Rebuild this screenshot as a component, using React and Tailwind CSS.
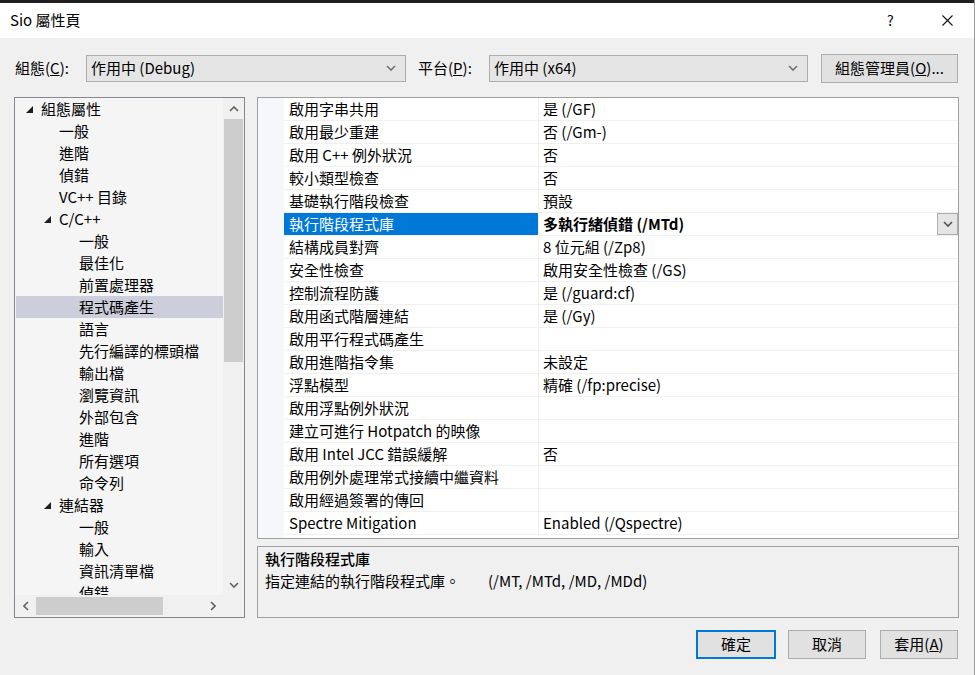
import React from "react";

const tree = [
  { t: "組態屬性", pl: "pl-[10px]", exp: true },
  { t: "一般", pl: "pl-[44px]" },
  { t: "進階", pl: "pl-[44px]" },
  { t: "偵錯", pl: "pl-[44px]" },
  { t: "VC++ 目錄", pl: "pl-[44px]" },
  { t: "C/C++", pl: "pl-[28px]", exp: true },
  { t: "一般", pl: "pl-[64px]" },
  { t: "最佳化", pl: "pl-[64px]" },
  { t: "前置處理器", pl: "pl-[64px]" },
  { t: "程式碼產生", pl: "pl-[64px]", sel: true },
  { t: "語言", pl: "pl-[64px]" },
  { t: "先行編譯的標頭檔", pl: "pl-[64px]" },
  { t: "輸出檔", pl: "pl-[64px]" },
  { t: "瀏覽資訊", pl: "pl-[64px]" },
  { t: "外部包含", pl: "pl-[64px]" },
  { t: "進階", pl: "pl-[64px]" },
  { t: "所有選項", pl: "pl-[64px]" },
  { t: "命令列", pl: "pl-[64px]" },
  { t: "連結器", pl: "pl-[28px]", exp: true },
  { t: "一般", pl: "pl-[64px]" },
  { t: "輸入", pl: "pl-[64px]" },
  { t: "資訊清單檔", pl: "pl-[64px]" },
  { t: "偵錯", pl: "pl-[64px]" },
];

const props = [
  ["啟用字串共用", "是 (/GF)"],
  ["啟用最少重建", "否 (/Gm-)"],
  ["啟用 C++ 例外狀況", "否"],
  ["較小類型檢查", "否"],
  ["基礎執行階段檢查", "預設"],
  ["執行階段程式庫", "多執行緒偵錯 (/MTd)", true],
  ["結構成員對齊", "8 位元組 (/Zp8)"],
  ["安全性檢查", "啟用安全性檢查 (/GS)"],
  ["控制流程防護", "是 (/guard:cf)"],
  ["啟用函式階層連結", "是 (/Gy)"],
  ["啟用平行程式碼產生", ""],
  ["啟用進階指令集", "未設定"],
  ["浮點模型", "精確 (/fp:precise)"],
  ["啟用浮點例外狀況", ""],
  ["建立可進行 Hotpatch 的映像", ""],
  ["啟用 Intel JCC 錯誤緩解", "否"],
  ["啟用例外處理常式接續中繼資料", ""],
  ["啟用經過簽署的傳回", ""],
  ["Spectre Mitigation", "Enabled (/Qspectre)"],
];

function Chevron({ dir = "down", className = "" }) {
  const pts = {
    down: "1,1 5,5 9,1",
    up: "1,5 5,1 9,5",
    left: "5,1 1,5 5,9",
    right: "1,1 5,5 1,9",
  }[dir];
  const vb = dir === "left" || dir === "right" ? "0 0 6 10" : "0 0 10 6";
  const sz = dir === "left" || dir === "right" ? "w-[6px] h-[10px]" : "w-[10px] h-[6px]";
  return (
    <svg viewBox={vb} className={`${sz} ${className}`} fill="none" stroke="currentColor" strokeWidth="1.6">
      <polyline points={pts} />
    </svg>
  );
}

function Combo({ text, w }) {
  return (
    <div className={`${w} h-[27px] bg-[#e5e5e5] border border-[#adadad] flex items-center pl-[4px] pr-[9px]`}>
      <span className="flex-1 text-[15px] text-black">{text}</span>
      <Chevron dir="down" className="text-[#707070] w-[8px] h-[5px]" />
    </div>
  );
}

export default function App() {
  return (
    <div className="w-[975px] h-[675px] bg-[#f0f0f0] flex flex-col font-['Noto_Sans_CJK_TC',sans-serif] text-black overflow-hidden border-r border-[#9a9a9a]">
      <div className="h-[3px] bg-[#1f1f1f]" />
      {/* title bar */}
      <div className="h-[35px] bg-white flex items-center pl-[10px]">
        <span className="text-[15px] flex-1">Sio 屬性頁</span>
        <span className="text-[14px] w-[55px] text-left">?</span>
        <div className="w-[32px] flex items-center">
          <svg viewBox="0 0 11 11" className="w-[11px] h-[11px]" stroke="#111" strokeWidth="1.1">
            <line x1="0.5" y1="0.5" x2="10.5" y2="10.5" />
            <line x1="10.5" y1="0.5" x2="0.5" y2="10.5" />
          </svg>
        </div>
      </div>

      {/* toolbar */}
      <div className="mt-[15px] h-[30px] flex items-center pl-[15px]">
        <span className="text-[15px] w-[71px]">
          組態(<span className="underline">C</span>):
        </span>
        <Combo text="作用中 (Debug)" w="w-[320px]" />
        <span className="text-[15px] ml-[12px] w-[71px]">
          平台(<span className="underline">P</span>):
        </span>
        <Combo text="作用中 (x64)" w="w-[319px]" />
        <div className="ml-[13px] w-[137px] h-[29px] bg-[#e1e1e1] border border-[#adadad] flex items-center justify-center text-[15px]">
          組態管理員(<span className="underline">O</span>)...
        </div>
      </div>

      {/* main */}
      <div className="mt-[14px] h-[521px] flex pl-[14px]">
        {/* tree */}
        <div className="w-[231px] h-full border border-[#828790] flex flex-col bg-[#f0f0f0]">
          <div className="flex flex-1 min-h-0">
            <div className="flex-1 bg-[#f5f5f5] overflow-hidden">
              {tree.map((n, i) => (
                <div
                  key={i}
                  className={`h-[22px] flex items-center text-[15px] whitespace-nowrap ${n.pl} ${n.sel ? "bg-[#cccedb] ml-[1px]" : ""}`}
                >
                  {n.exp && (
                    <span className="w-[16px] flex items-center">
                      <svg viewBox="0 0 7 7" className="w-[7px] h-[7px] ml-[1px]">
                        <polygon points="7,0 7,7 0,7" fill="#1e1e1e" />
                      </svg>
                    </span>
                  )}
                  <span className={n.sel ? "-ml-[1px]" : ""}>{n.t}</span>
                </div>
              ))}
            </div>
            <div className="w-[21px] flex flex-col items-center bg-[#f0f0f0]">
              <div className="h-[21px] flex items-center justify-center text-[#606060]">
                <Chevron dir="up" />
              </div>
              <div className="w-[19px] h-[243px] bg-[#cdcdcd]" />
              <div className="flex-1" />
              <div className="h-[21px] flex items-center justify-center text-[#606060]">
                <Chevron dir="down" />
              </div>
            </div>
          </div>
          <div className="h-[22px] flex items-center bg-[#f0f0f0]">
            <div className="w-[21px] flex items-center justify-center text-[#606060]">
              <Chevron dir="left" />
            </div>
            <div className="w-[127px] h-[18px] bg-[#cdcdcd]" />
            <div className="flex-1" />
            <div className="w-[21px] flex items-center justify-center text-[#606060]">
              <Chevron dir="right" />
            </div>
            <div className="w-[21px]" />
          </div>
        </div>

        {/* right column */}
        <div className="ml-[12px] w-[702px] flex flex-col">
          <div className="h-[442px] border border-[#a0a0a0] bg-white flex overflow-hidden">
            <div className="w-[26px] bg-[#f5f7fb]" />
            <div className="flex-1 flex flex-col">
              {props.map(([n, v, sel], i) => (
                <div key={i} className="h-[23px] flex border-b border-[#f0f0f0] text-[15px]">
                  <div
                    className={`w-[255px] flex items-center pl-[5px] border-r border-[#f0f0f0] ${sel ? "bg-[#0078d7] text-white" : ""}`}
                  >
                    {n}
                  </div>
                  <div className={`flex-1 flex items-center pl-[4px] ${sel ? "font-bold" : ""}`}>
                    <span className="flex-1">{v}</span>
                    {sel && (
                      <div className="w-[21px] h-[22px] bg-[#e5e5e5] border border-[#acacac] flex items-center justify-center text-[#505050]">
                        <Chevron dir="down" className="w-[8px] h-[5px]" />
                      </div>
                    )}
                  </div>
                </div>
              ))}
            </div>
          </div>
          <div className="mt-[7px] h-[72px] border border-[#a0a0a0] bg-[#f0f0f0] pl-[7px] pt-[1px]">
            <div className="h-[22px] flex items-center text-[15px] font-medium">執行階段程式庫</div>
            <div className="h-[22px] flex items-center text-[15px]">
              <span className="w-[223px]">指定連結的執行階段程式庫。</span>
              <span>(/MT, /MTd, /MD, /MDd)</span>
            </div>
          </div>
        </div>
      </div>

      {/* buttons */}
      <div className="mt-[12px] flex pl-[696px] text-[15px]">
        <div className="w-[80px] h-[29px] bg-[#e1e1e1] border-2 border-[#0078d7] flex items-center justify-center">確定</div>
        <div className="ml-[12px] w-[78px] h-[29px] bg-[#e1e1e1] border border-[#adadad] flex items-center justify-center">取消</div>
        <div className="ml-[14px] w-[78px] h-[29px] bg-[#e1e1e1] border border-[#adadad] flex items-center justify-center">
          套用(<span className="underline">A</span>)
        </div>
      </div>
    </div>
  );
}
